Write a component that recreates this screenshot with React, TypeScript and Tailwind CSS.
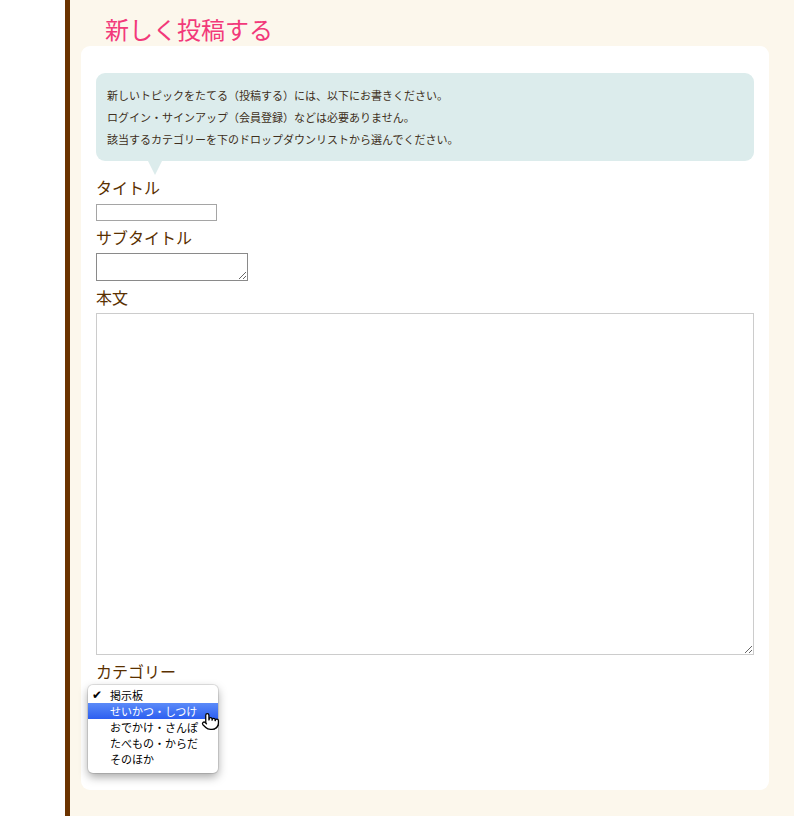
import { Pointer } from "lucide-react";

const jp = { fontFamily: '"Noto Sans CJK JP", "Noto Sans", sans-serif' };

export default function App() {
    return (
        <div className="flex min-h-[816px] w-[794px] bg-white" style={jp}>
            {/* left gutter */}
            <div className="w-[65px] shrink-0 bg-white" />
            <div className="w-[5px] shrink-0 bg-[#6b3300]" />

            {/* main column */}
            <div className="flex-1 bg-[#fcf7ec] pl-[11px] pr-[25px]">
                <h1 className="ml-[24px] pt-[12px] text-[24px] leading-[34px] text-[#f2397a]">
                    新しく投稿する
                </h1>

                <div className="rounded-[9px] bg-white px-[15px] pt-[27px] pb-[83px]">
                    {/* Balloon */}
                    <div className="relative mb-[14px] rounded-[9px] bg-[#dcecec] px-[11px] py-[11px] text-[11px] leading-[22px] text-[#3e2f20]">
                        <p>新しいトピックをたてる（投稿する）には、以下にお書きください。</p>
                        <p>ログイン・サインアップ（会員登録）などは必要ありません。</p>
                        <p>該当するカテゴリーを下のドロップダウンリストから選んでください。</p>
                        <div className="absolute top-full left-[52px] h-0 w-0 border-x-[7px] border-t-[14px] border-x-transparent border-t-[#dcecec]" />
                    </div>

                    <form className="text-[16px] text-[#5a3000]">
                        <label className="block leading-6">タイトル</label>
                        <input
                            type="text"
                            className="mt-[5px] block h-[17px] w-[121px] border border-[#a5a5a5] bg-white"
                        />

                        <label className="mt-1 block leading-6">サブタイトル</label>
                        <textarea className="mt-1 block h-[28px] w-[152px] resize border border-[#8a8a8a] bg-white" />

                        <label className="mt-1 block leading-6">本文</label>
                        <textarea className="mt-1 block h-[342px] w-[658px] resize border border-[#cccccc] bg-white" />

                        <label className="mt-1 block leading-6">カテゴリー</label>
                        <div className="relative mt-1 h-[20px]">
                            {/* open select menu */}
                            <div className="absolute top-[-2px] left-[-8px] z-10 w-[130px] rounded-[5px] bg-white pt-[2px] pb-[6px] text-[11px] leading-[16px] text-black shadow-[0_4px_10px_rgba(0,0,0,0.35)] ring-1 ring-black/10">
                                <div className="flex items-center">
                                    <span
                                        className="w-[22px] pl-[4px] text-[12px] font-bold"
                                        style={{ fontFamily: '"DejaVu Sans", sans-serif' }}
                                    >
                                        ✔
                                    </span>
                                    <span>掲示板</span>
                                </div>
                                <div className="flex items-center bg-gradient-to-b from-[#5b8af8] to-[#2d5ef0] text-white">
                                    <span className="w-[22px]" />
                                    <span>せいかつ・しつけ</span>
                                </div>
                                <div className="flex items-center">
                                    <span className="w-[22px]" />
                                    <span>おでかけ・さんぽ</span>
                                </div>
                                <div className="flex items-center">
                                    <span className="w-[22px]" />
                                    <span>たべもの・からだ</span>
                                </div>
                                <div className="flex items-center">
                                    <span className="w-[22px]" />
                                    <span>そのほか</span>
                                </div>
                                <Pointer
                                    className="absolute top-[27px] left-[113px] h-[19px] w-[19px] text-black"
                                    fill="white"
                                    strokeWidth={1.6}
                                />
                            </div>
                        </div>
                    </form>
                </div>
            </div>
        </div>
    );
}
